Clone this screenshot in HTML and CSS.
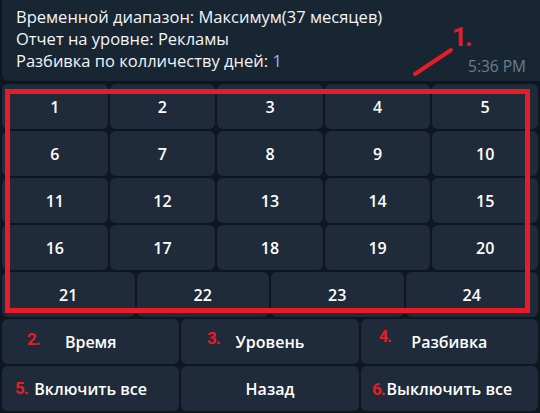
FILE: index.html
```html
<!DOCTYPE html>
<html lang="ru">
<head>
<meta charset="utf-8">
<link rel="stylesheet" href="styles.css">
</head>
<body>
<div class="chat">
  <div class="bubble">
    <div class="line">Временной диапазон: Максимум(37 месяцев)</div>
    <div class="line">Отчет на уровне: Рекламы</div>
    <div class="line last">
      <span>Разбивка по колличеству дней: <span class="val">1</span></span>
      <span class="time">5:36 PM</span>
    </div>
  </div>
  <div class="keyboard">
    <div class="row"><div class="btn">1</div><div class="btn">2</div><div class="btn">3</div><div class="btn">4</div><div class="btn">5</div></div>
    <div class="row"><div class="btn">6</div><div class="btn">7</div><div class="btn">8</div><div class="btn">9</div><div class="btn">10</div></div>
    <div class="row"><div class="btn">11</div><div class="btn">12</div><div class="btn">13</div><div class="btn">14</div><div class="btn">15</div></div>
    <div class="row"><div class="btn">16</div><div class="btn">17</div><div class="btn">18</div><div class="btn">19</div><div class="btn">20</div></div>
    <div class="row"><div class="btn">21</div><div class="btn">22</div><div class="btn">23</div><div class="btn">24</div></div>
    <div class="row"><div class="btn">Время</div><div class="btn">Уровень</div><div class="btn">Разбивка</div></div>
    <div class="row"><div class="btn">Включить все</div><div class="btn">Назад</div><div class="btn">Выключить все</div></div>
  </div>
</div>
<div class="marks">
  <div class="frame"></div>
  <svg class="stroke" width="540" height="413" viewBox="0 0 540 413"><line x1="415" y1="74" x2="451" y2="50" stroke="#e81c26" stroke-width="4" stroke-linecap="round"/></svg>
  <span class="num n1">1.</span>
  <span class="num n2">2.</span>
  <span class="num n3">3.</span>
  <span class="num n4">4.</span>
  <span class="num n5">5.</span>
  <span class="num n6">6.</span>
</div>
</body>
</html>
```
FILE: styles.css
```css
html, body {
  margin: 0;
  padding: 0;
}
body {
  width: 540px;
  height: 413px;
  overflow: hidden;
  background: #0e1620;
  font-family: "Open Sans", "Noto Sans", sans-serif;
  position: relative;
}
.chat {
  display: flex;
  flex-direction: column;
  gap: 3px;
  padding: 0 2px;
}
.bubble {
  background: #182533;
  border-radius: 0 0 0 7px;
  margin-right: -2px;
  padding: 6px 14px 9px 14px;
  color: #f2f4f6;
  font-size: 16.5px;
  line-height: 22px;
}
.line.last {
  display: flex;
  justify-content: space-between;
  align-items: flex-end;
}
.val {
  color: #92b9e6;
}
.time {
  color: #6b7d8f;
  font-size: 15.5px;
  line-height: 15px;
  margin-bottom: -2px;
}
.keyboard {
  display: flex;
  flex-direction: column;
  gap: 2px;
}
.row {
  display: flex;
  gap: 2px;
  height: 45px;
}
.btn {
  flex: 1 1 0;
  display: flex;
  align-items: center;
  justify-content: center;
  background: #1f2b3a;
  border-radius: 6px;
  color: #ffffff;
  font-size: 16px;
  font-weight: 600;
}
.marks {
  position: absolute;
  left: 0;
  top: 0;
  width: 540px;
  height: 413px;
  pointer-events: none;
}
.frame {
  position: absolute;
  left: 5px;
  top: 89px;
  width: 515px;
  height: 214px;
  border: 5px solid #e81c26;
}
.stroke {
  position: absolute;
  left: 0;
  top: 0;
}
.num {
  position: absolute;
  font-family: Roboto, "Liberation Sans", sans-serif;
  font-weight: 700;
  color: #e81c26;
  font-size: 17px;
  line-height: 1;
  letter-spacing: -1px;
}
.n1 { left: 452px; top: 24px; font-size: 26px; letter-spacing: -2px; }
.n2 { left: 27px; top: 331px; }
.n3 { left: 207px; top: 330px; }
.n4 { left: 379px; top: 329px; font-size: 16px; }
.n5 { left: 15px; top: 380px; }
.n6 { left: 372px; top: 381px; }
```
